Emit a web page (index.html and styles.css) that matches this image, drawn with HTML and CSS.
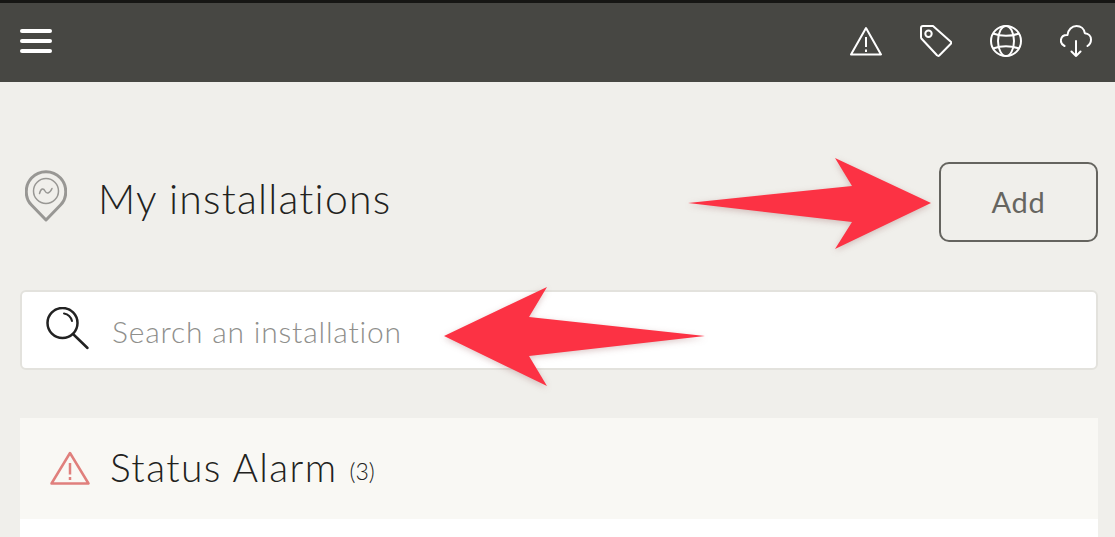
FILE: index.html
```html
<!DOCTYPE html>
<html lang="en">
<head>
  <meta charset="utf-8">
  <meta name="viewport" content="width=device-width, initial-scale=1">
  <title>My installations</title>
  <link rel="stylesheet" href="styles.css">
</head>
<body>
  <div class="topbar">
    <div class="burger"><span></span><span></span><span></span></div>
    <div class="topbar-icons">
      <svg class="top-icon" viewBox="0 0 32 32" fill="none" stroke="#fff" stroke-width="2" stroke-linejoin="round">
        <path d="M16 3 L31 29.5 H1 Z"/>
        <path d="M16 12 V22 M16 24.5 V27"/>
      </svg>
      <svg class="top-icon" viewBox="0 0 32 32" fill="none" stroke="#fff" stroke-width="2" stroke-linejoin="round">
        <path d="M1 3 Q1 1 3 1 H13 L30.8 16.8 Q31.8 17.8 30.8 18.8 L19.5 30.3 Q18.3 31.4 17 30.3 L1.6 13.8 Q1 13 1 12 Z"/>
        <circle cx="8.5" cy="8.7" r="3.2"/>
      </svg>
      <svg class="top-icon" viewBox="0 0 32 32" fill="none" stroke="#fff" stroke-width="2">
        <circle cx="16" cy="16" r="15"/>
        <ellipse cx="16" cy="16" rx="8" ry="15"/>
        <path d="M3 8.5 Q16 13 29 8.5 M3 23.5 Q16 19 29 23.5"/>
      </svg>
      <svg class="top-icon" viewBox="0 0 32 32" fill="none" stroke="#fff" stroke-width="2" stroke-linecap="round" stroke-linejoin="round">
        <path d="M4.5 21 C1.5 19.5 0.5 17 1 14.5 C1.6 11.5 4 9.8 7.5 10 C8 4.5 12 1 16.5 1 C21 1 24.2 4 24.8 8.2 C28.5 8.4 31 11 31 14.5 C31 17.5 29.5 19.8 27.5 21"/>
        <path d="M16 16 V31 M11.5 26.5 L16 31 L20.5 26.5"/>
      </svg>
    </div>
  </div>

  <div class="content">
    <div class="title-row">
      <div class="title-left">
        <svg class="pin-icon" viewBox="0 0 42 52" fill="none" stroke="#989794">
          <path stroke-width="3" stroke-linejoin="round" d="M21 50 L6.5 35 C-0.5 28 -0.5 15.5 6.5 8 C14.5 -0.5 27.5 -0.5 35.5 8 C42.5 15.5 42.5 28 35.5 35 Z"/>
          <circle cx="21" cy="21" r="12.5" stroke-width="1.5"/>
          <path stroke-width="1.5" stroke-linecap="round" d="M14.5 23.5 C16 18 18.5 18 20 21 C21.5 24 24.5 24 27 18.5"/>
        </svg>
        <h1 class="page-title">My installations</h1>
      </div>
      <button class="add-btn">Add</button>
    </div>

    <div class="search-box">
      <svg class="search-icon" viewBox="0 0 44 44" fill="none" stroke="#222" stroke-linecap="round">
        <circle cx="16.5" cy="16" r="15" stroke-width="2.5"/>
        <path stroke-width="2" d="M18 6.5 C22 7.2 25 10 26 14"/>
        <path stroke-width="2.5" d="M27 27 L41.5 41"/>
      </svg>
      <span class="search-text">Search an installation</span>
    </div>

    <div class="status-section">
      <svg class="alarm-icon" viewBox="0 0 40 34" fill="none" stroke="#e07f7c" stroke-width="2.5" stroke-linejoin="round">
        <path d="M20 2 L38.5 32.5 H1.5 Z"/>
        <path d="M20 12 V23.5 M20 26 V29"/>
      </svg>
      <span class="section-title">Status Alarm</span>
      <span class="section-count">(3)</span>
    </div>
    <div class="section-body"></div>
  </div>

  <svg class="arrow arrow-add" viewBox="0 0 245 93">
    <path d="M0 45 L164 28 L147 0 L243 45 L147 91 L164 64 Z"/>
  </svg>
  <svg class="arrow arrow-search" viewBox="0 0 264 101">
    <path d="M0 49 L103 0 L85 30 L261 49 L85 69 L103 99 Z"/>
  </svg>
</body>
</html>
```

FILE: styles.css
```css
* {
  box-sizing: border-box;
}

html, body {
  height: 100%;
}

body {
  margin: 0;
  background: #f0efeb;
  font-family: Lato, 'Open Sans', sans-serif;
  color: #222220;
  overflow: hidden;
  position: relative;
}

.topbar {
  height: 82px;
  background: #474743;
  border-top: 3px solid #161614;
  display: flex;
  align-items: center;
  justify-content: space-between;
  padding: 0 23px 3px 20px;
}

.burger {
  display: flex;
  flex-direction: column;
  gap: 6px;
  width: 32px;
}

.burger span {
  height: 4px;
  background: white;
  border-radius: 2px;
}

.topbar-icons {
  display: flex;
  gap: 38px;
}

.top-icon {
  width: 32px;
  height: 32px;
  display: block;
}

.content {
  padding: 80px 17px 0 20px;
}

.title-row {
  height: 80px;
  display: flex;
  align-items: center;
  justify-content: space-between;
}

.title-left {
  display: flex;
  align-items: center;
  gap: 31px;
  padding-left: 5px;
}

.pin-icon {
  width: 42px;
  height: 52px;
  margin-top: -12px;
}

.page-title {
  margin: -7px 0 0;
  font-size: 41px;
  font-weight: 300;
  line-height: 1;
  letter-spacing: 1.2px;
}

.add-btn {
  width: 159px;
  height: 80px;
  padding: 0 0 2px;
  background: transparent;
  border: 2px solid #65645f;
  border-radius: 10px;
  color: #666560;
  font-family: inherit;
  font-size: 29px;
  font-weight: 400;
  letter-spacing: 0.8px;
}

.search-box {
  margin-top: 48px;
  height: 80px;
  background: white;
  border: 2px solid #e3e2dd;
  border-radius: 6px;
  display: flex;
  align-items: center;
  padding-left: 24px;
}

.search-icon {
  width: 44px;
  height: 44px;
  margin-top: -2px;
}

.search-text {
  margin: 2px 0 0 22px;
  font-size: 30px;
  font-weight: 300;
  letter-spacing: 0.8px;
  color: #8f8f8c;
}

.status-section {
  margin-top: 48px;
  height: 101px;
  background: #f9f8f4;
  display: flex;
  align-items: center;
  padding-left: 30px;
}

.alarm-icon {
  width: 40px;
  height: 34px;
  margin-top: -2px;
}

.section-title {
  margin: -4px 0 0 20px;
  font-size: 39px;
  font-weight: 300;
  letter-spacing: 1.4px;
}

.section-count {
  margin: 4px 0 0 12px;
  font-size: 23px;
  font-weight: 300;
}

.section-body {
  height: 18px;
  background: white;
}

.arrow {
  position: absolute;
  fill: #fc3244;
  filter: drop-shadow(0 2px 3px rgba(120, 40, 40, 0.25));
}

.arrow-add {
  left: 688px;
  top: 158px;
  width: 245px;
  height: 93px;
}

.arrow-search {
  left: 444px;
  top: 287px;
  width: 264px;
  height: 101px;
}
```
